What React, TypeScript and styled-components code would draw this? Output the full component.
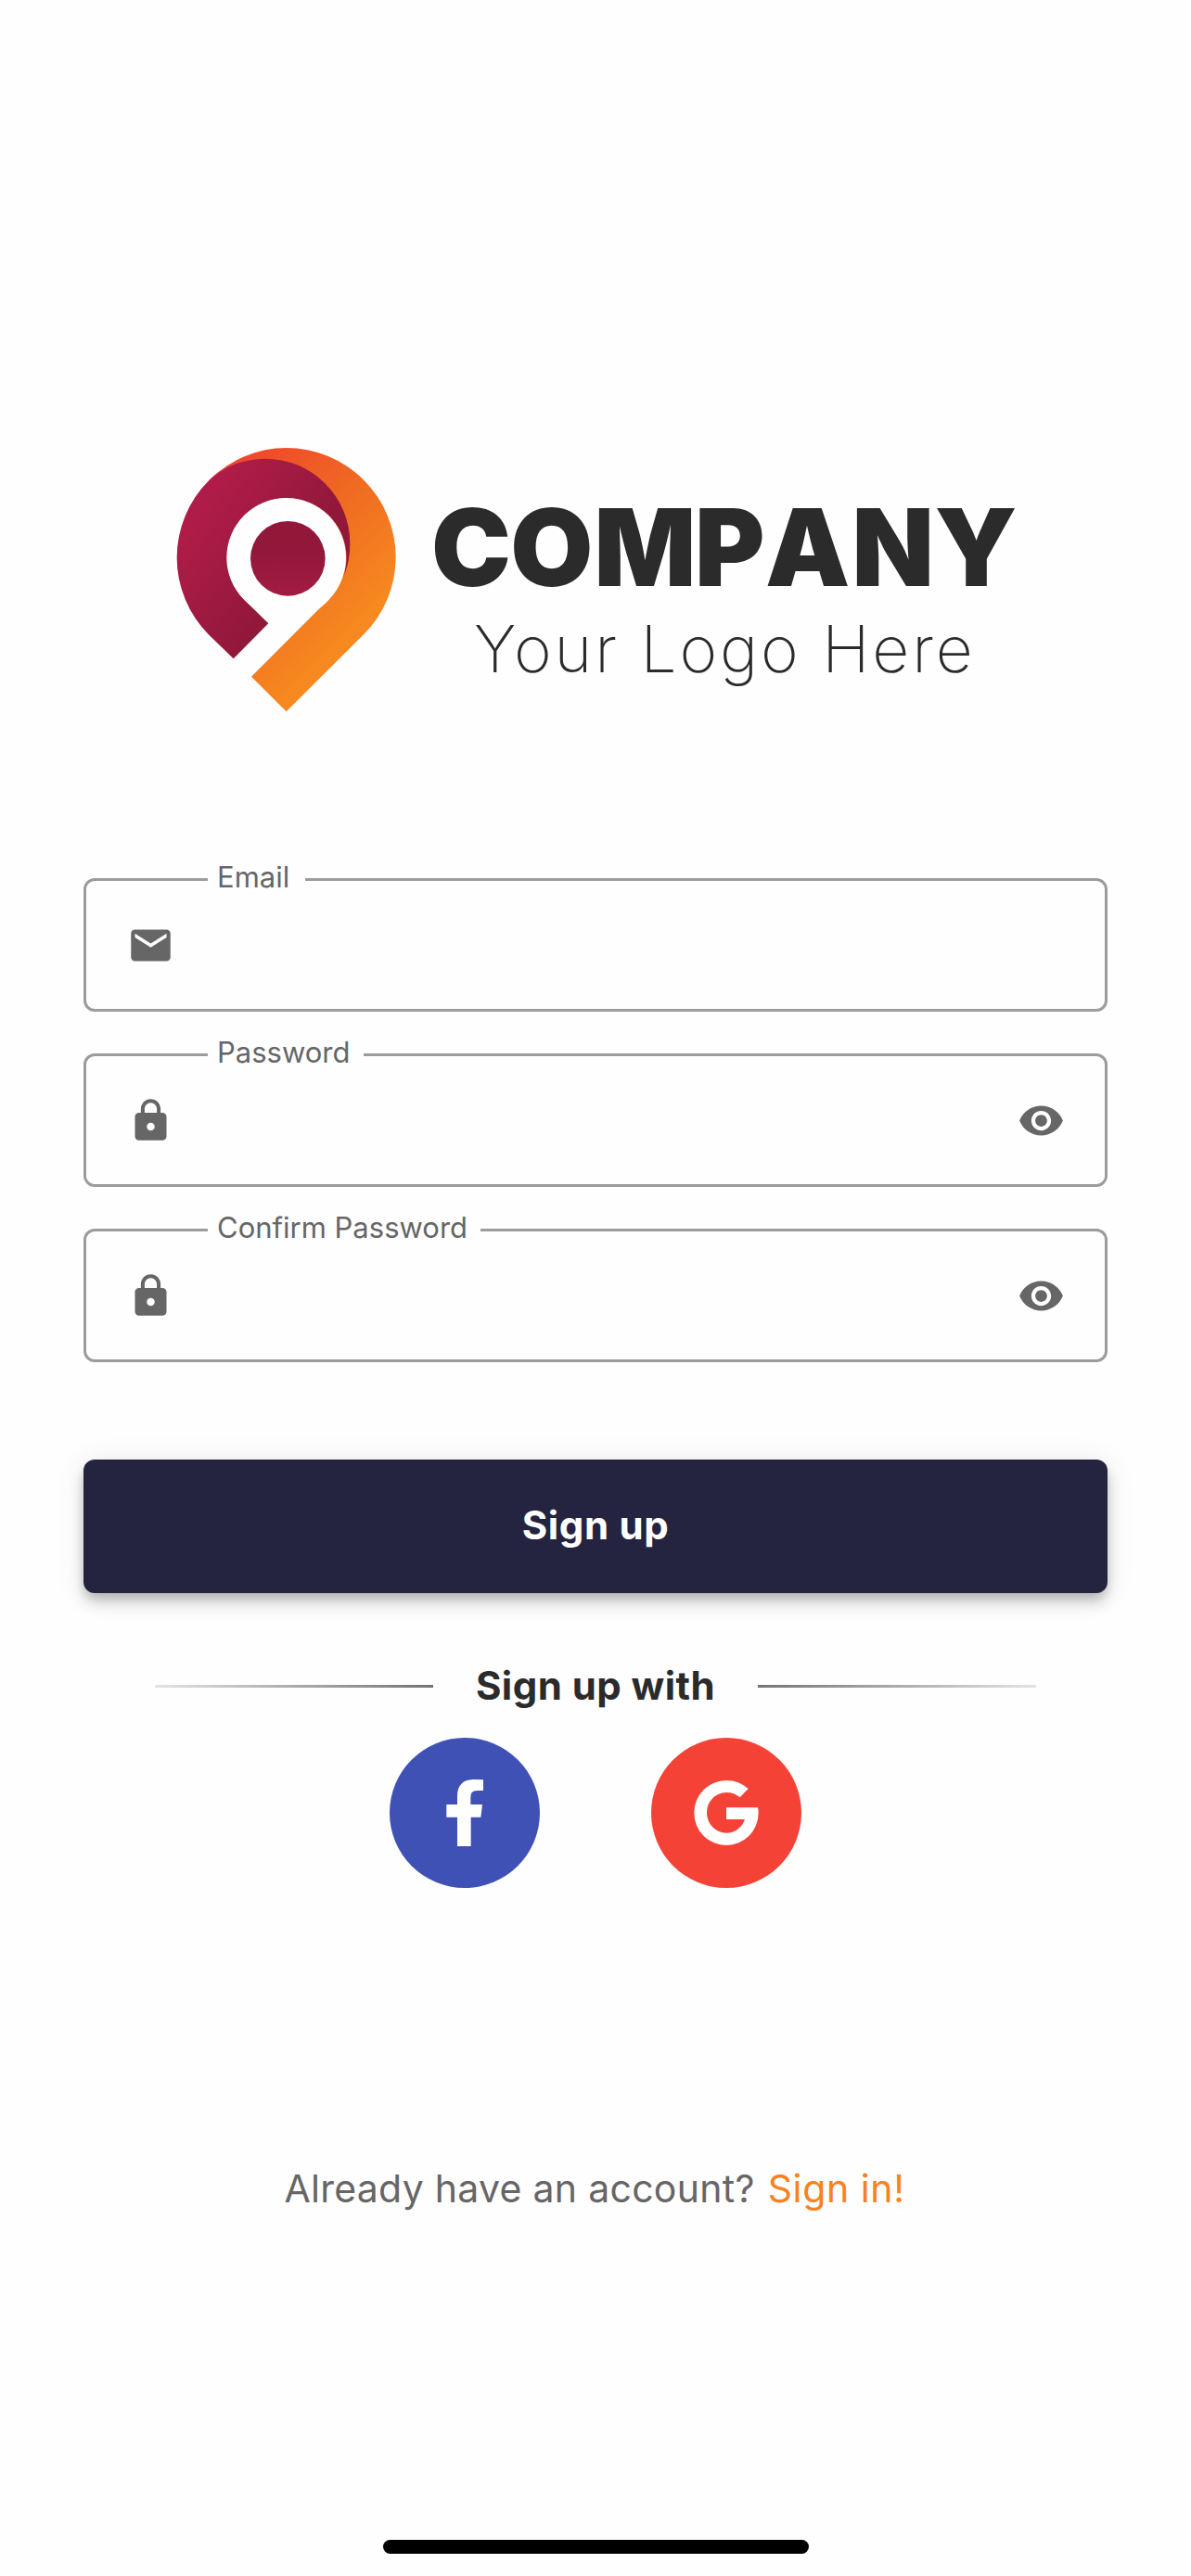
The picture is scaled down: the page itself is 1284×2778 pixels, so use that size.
import React from "react";
import styled, { createGlobalStyle } from "styled-components";
import { MdEmail, MdLock, MdRemoveRedEye } from "react-icons/md";

const GlobalStyle = createGlobalStyle`
  *, *::before, *::after { box-sizing: border-box; }
  body { margin: 0; background: #fefefe; font-family: Inter, "Liberation Sans", sans-serif; }
`;

const Screen = styled.main`
  display: flex;
  flex-direction: column;
  align-items: center;
  width: 1284px;
  height: 2778px;
  padding: 460px 90px 24px;
  overflow: hidden;
  background: #fefefe;
`;

const Logo = styled.svg`
  display: block;
  flex: none;
  width: 944px;
  height: 330px;
  font-family: Inter, sans-serif;
  fill: #2b2b2b;
`;

const Form = styled.form`
  display: flex;
  flex-direction: column;
  gap: 28px;
  width: 100%;
  margin-top: 140px;
`;

const Field = styled.fieldset`
  width: 100%;
  height: 161px;
  min-width: 0;
  margin: 0;
  padding: 0 43.5px;
  border: 3px solid #9c9c9c;
  border-radius: 12px;
  color: #666;
`;

const Label = styled.legend<{ $notch: number }>`
  width: ${(p) => p.$notch}px;
  margin-left: 87.5px;
  padding: 0 0 5px 10px;
  font-size: 31px;
  line-height: 32px;
  white-space: nowrap;
`;

const FieldRow = styled.div`
  display: flex;
  align-items: center;
  gap: 45px;
  height: 138px;
  margin-top: -17px;
  svg { flex: none; width: 51px; height: 51px; }
`;

const Input = styled.input`
  flex: 1;
  min-width: 0;
  height: 60px;
  padding: 0;
  border: 0;
  outline: 0;
  background: transparent;
  font: 400 42px Inter, sans-serif;
`;

const IconButton = styled.button`
  display: flex;
  padding: 0;
  border: 0;
  background: none;
  color: inherit;
`;

const SubmitButton = styled.button`
  width: 100%;
  height: 144px;
  margin-top: 76.5px;
  padding: 0 0 2px;
  border: 0;
  border-radius: 12px;
  background: #252440;
  color: #fff;
  font: 700 42px Inter, sans-serif;
  letter-spacing: 0.65px;
  box-shadow: 0 6px 12px -3px rgba(0, 0, 0, 0.2), 0 12px 15px rgba(0, 0, 0, 0.12),
    0 3px 30px rgba(0, 0, 0, 0.1);
`;

const Divider = styled.div`
  display: flex;
  align-items: center;
  justify-content: space-between;
  width: 951px;
  height: 50px;
  margin-top: 76px;
`;

const Line = styled.span<{ $to: "left" | "right" }>`
  width: 300px;
  height: 3px;
  background: linear-gradient(to ${(p) => p.$to}, #747474, #e3e3e3);
`;

const DividerText = styled.span`
  padding-bottom: 3px;
  color: #2b2b2b;
  font-size: 42px;
  font-weight: 700;
  line-height: 47px;
  letter-spacing: 0.45px;
`;

const SocialRow = styled.div`
  display: flex;
  gap: 120px;
  margin-top: 30.5px;
`;

const SocialButton = styled.button<{ $color: string }>`
  width: 162px;
  height: 162px;
  padding: 0;
  border: 0;
  border-radius: 50%;
  background: ${(p) => p.$color};
  svg { display: block; width: 162px; height: 162px; fill: #fff; }
`;

const Footer = styled.p`
  display: flex;
  gap: 14px;
  margin: 299px 0 0;
  padding-right: 2px;
  color: #666;
  font-size: 41px;
  line-height: 50px;
  letter-spacing: 0.28px;
  white-space: nowrap;
`;

const SignInLink = styled.a`
  color: #f68220;
  letter-spacing: 0.6px;
`;

const HomeBar = styled.div`
  width: 459px;
  height: 15px;
  margin-top: auto;
  border-radius: 8px;
  background: #000;
`;

const LogoArt = () => (
  <Logo viewBox="170 460 944 330" role="img" aria-label="Company logo">
    <defs>
      <linearGradient id="orange" gradientUnits="userSpaceOnUse" x1="230" y1="130" x2="700" y2="590">
        <stop offset="0" stopColor="#f0452d" />
        <stop offset="0.5" stopColor="#ef6a22" />
        <stop offset="1" stopColor="#f6891f" />
      </linearGradient>
      <linearGradient id="plum" gradientUnits="userSpaceOnUse" x1="130" y1="270" x2="430" y2="480">
        <stop offset="0" stopColor="#b01c49" />
        <stop offset="1" stopColor="#91183a" />
      </linearGradient>
      <linearGradient id="dot" x1="0" y1="0" x2="0" y2="1">
        <stop offset="0.4" stopColor="#911839" />
        <stop offset="1" stopColor="#a31b43" />
      </linearGradient>
    </defs>
    <g transform="translate(170 460) scale(0.33333)">
      <path
        fill="url(#orange)"
        d="M166 174A354 354 0 0 1 416 69A354 354 0 0 1 770 424A354 354 0 0 1 666 673L416 922L303 809L520 592Q574 550 597 490L500 250Z"
      />
      <path
        fill="url(#plum)"
        d="M166 174A274 274 0 0 1 348 104A274 274 0 0 1 622 378Q622 440 600 488A193 193 0 1 0 280 560L358 637L245 751L166 674A354 354 0 0 1 62 424A354 354 0 0 1 166 174Z"
      />
      <circle fill="#fefefe" cx="416" cy="424" r="193" />
      <circle fill="url(#dot)" cx="421" cy="427" r="121" />
    </g>
    <text x="465 550.2 640.5 749 825 918.5 1007.5" y="631.7" fontSize="115" fontWeight="900">COMPANY</text>
    <text x="511" y="724.5" fontSize="69.5" fontWeight="200" letterSpacing="2.9">Your Logo Here</text>
  </Logo>
);

const fields = [
  { label: "Email", type: "email", notch: 105, Icon: MdEmail, secret: false },
  { label: "Password", type: "password", notch: 168, Icon: MdLock, secret: true },
  { label: "Confirm Password", type: "password", notch: 294, Icon: MdLock, secret: true },
];

export default function App() {
  return (
    <>
      <GlobalStyle />
      <Screen>
        <LogoArt />
        <Form>
          {fields.map(({ label, type, notch, Icon, secret }) => (
            <Field key={label}>
              <Label $notch={notch}>{label}</Label>
              <FieldRow>
                <Icon />
                <Input type={type} aria-label={label} />
                {secret && (
                  <IconButton type="button" aria-label="Show password">
                    <MdRemoveRedEye />
                  </IconButton>
                )}
              </FieldRow>
            </Field>
          ))}
          <SubmitButton type="button">Sign up</SubmitButton>
        </Form>
        <Divider>
          <Line $to="left" />
          <DividerText>Sign up with</DividerText>
          <Line $to="right" />
        </Divider>
        <SocialRow>
          <SocialButton $color="#3f51b5" aria-label="Facebook">
            <svg viewBox="-150 -108 486 486">
              <path d="M153 28Q140 27 123 27C87 27 69 46 69 82V108H34V149H69V243H113V149H145L150 108H112V88C112 70 117 63 136 63H153Z" />
            </svg>
          </SocialButton>
          <SocialButton $color="#f44336" aria-label="Google">
            <svg viewBox="696 -108 486 486">
              <path d="M1010 57A105 105 0 0 0 939 30A104 105 0 0 0 835 135A104 105 0 0 0 939 240A104 105 0 0 0 1043 135Q1043 126 1041 118H939V156H999A63 65 0 0 1 939 200A63 65 0 0 1 876 135A63 65 0 0 1 939 69Q965 69 983 85Z" />
            </svg>
          </SocialButton>
        </SocialRow>
        <Footer>
          <span>Already have an account?</span>
          <SignInLink>Sign in!</SignInLink>
        </Footer>
        <HomeBar />
      </Screen>
    </>
  );
}
